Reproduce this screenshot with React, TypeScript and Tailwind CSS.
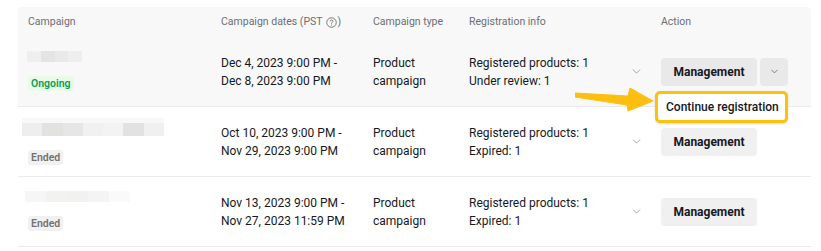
import { ChevronDown } from 'lucide-react'

type Row = {
  status: 'Ongoing' | 'Ended'
  start: string
  end: string
  info: string[]
  blur: { w: number; ml: number; shades: string[]; top?: boolean }
  open?: boolean
}

const rows: Row[] = [
  {
    status: 'Ongoing',
    start: 'Dec 4, 2023 9:00 PM -',
    end: 'Dec 8, 2023 9:00 PM',
    info: ['Registered products: 1', 'Under review: 1'],
    blur: { w: 55, ml: -1, shades: ['bg-[#efefef]', 'bg-[#e4e4e2]', 'bg-[#e9e9e9]', 'bg-[#eeeeee]'] },
    open: true,
  },
  {
    status: 'Ended',
    start: 'Oct 10, 2023 9:00 PM -',
    end: 'Nov 29, 2023 9:00 PM',
    info: ['Registered products: 1', 'Expired: 1'],
    blur: {
      w: 142,
      ml: -6,
      shades: ['bg-[#eeeeee]', 'bg-[#e2e2e0]', 'bg-[#e6e6e6]', 'bg-[#f1f1f1]', 'bg-[#f3f3f3]', 'bg-[#e2e2e2]', 'bg-[#f0f0f0]'],
      top: true,
    },
  },
  {
    status: 'Ended',
    start: 'Nov 13, 2023 9:00 PM -',
    end: 'Nov 27, 2023 11:59 PM',
    info: ['Registered products: 1', 'Expired: 1'],
    blur: { w: 105, ml: -3, shades: ['bg-[#f6f6f6]', 'bg-[#f2f2f1]', 'bg-[#f1f1ef]', 'bg-[#f4f4f4]', 'bg-[#fafafa]'] },
  },
]

const cols = 'grid grid-cols-[203px_152px_96px_155px_37px_1fr] items-center'

function Blur({ blur }: { blur: Row['blur'] }) {
  return (
    <div style={{ width: blur.w, marginLeft: blur.ml }} className="flex flex-col">
      {blur.top && <div className="h-[5px] w-full bg-[#f8f8f8]" />}
      <div className={`flex ${blur.top ? 'h-[13px]' : 'h-[11px]'}`}>
        {blur.shades.map((s, i) => (
          <div key={i} className={`flex-1 ${s}`} />
        ))}
      </div>
    </div>
  )
}

export default function App() {
  return (
    <div className="min-h-screen bg-white pt-[7px] font-['Roboto',sans-serif] text-[#161823]">
      <div className="ml-[18px] w-[793px]">
        {/* header + hovered first row share the grey */}
        <div className="rounded-t-[4px] bg-[#f8f8f8]">
          <div className={`${cols} h-[30px] text-[10.5px] text-[#6d6e75]`}>
            <div className="pl-[10px]">Campaign</div>
            <div className="flex items-center">
              Campaign dates (PST
              <svg width="11" height="11" viewBox="0 0 12 12" className="ml-[3px] mr-[1px]">
                <circle cx="6" cy="6" r="5.2" fill="none" stroke="#6d6e75" strokeWidth="1" />
                <path d="M4.5 4.7a1.5 1.5 0 1 1 2.2 1.3c-.5.3-.7.5-.7 1v.4" fill="none" stroke="#6d6e75" strokeWidth="1" />
                <circle cx="6" cy="8.8" r="0.6" fill="#6d6e75" />
              </svg>
              )
            </div>
            <div>Campaign type</div>
            <div>Registration info</div>
            <div />
            <div>Action</div>
          </div>
          <RowView row={rows[0]} />
        </div>
        <RowView row={rows[1]} />
        <RowView row={rows[2]} />
      </div>
    </div>
  )
}

function RowView({ row }: { row: Row }) {
  return (
    <div className={`${cols} h-[70px] border-b border-[#ebebeb] text-[12px] leading-[18px]`}>
      <div className="flex flex-col gap-[12px] pl-[10px]">
        <Blur blur={row.blur} />
        <div>
          <span
            className={`rounded-[3px] px-[3px] py-[1px] text-[10.5px] leading-[13px] font-semibold ${
              row.status === 'Ongoing' ? 'bg-[#e9fbe6] text-[#0b9e55]' : 'bg-[#f1f1f2] text-[#75726e]'
            }`}
          >
            {row.status}
          </span>
        </div>
      </div>
      <div>
        <div>{row.start}</div>
        <div>{row.end}</div>
      </div>
      <div>
        <div>Product</div>
        <div>campaign</div>
      </div>
      <div>
        {row.info.map((t) => (
          <div key={t}>{t}</div>
        ))}
      </div>
      <div className="flex pl-[6px]">
        <ChevronDown size={13} strokeWidth={1.4} className="text-[#8a8b91]" />
      </div>
      <div>
        <div className="relative flex gap-[3px]">
          <button className="h-[28px] w-[96px] rounded-[4px] bg-black/[0.06] text-[12px] font-bold">
            Management
          </button>
          {row.open && (
            <>
              <button className="flex h-[28px] w-[28px] items-center justify-center rounded-[4px] bg-black/[0.06]">
                <ChevronDown size={11} strokeWidth={1.6} className="text-[#55565c]" />
              </button>
              <svg
                width="80"
                height="26"
                viewBox="0 0 80 26"
                className="absolute left-[-86px] top-[29px]"
              >
                <path
                  d="M0 6 L53 9 L55 1 L78 14 L53 24 L52 18 L0 10 Z"
                  fill="#fdbf0f"
                  strokeLinejoin="round"
                  stroke="#fdbf0f"
                  strokeWidth="1"
                />
              </svg>
              <div className="absolute left-[-6px] top-[33px] z-10 flex h-[32px] w-[133px] items-center whitespace-nowrap rounded-[5px] border-[3px] border-[#fcc10d] bg-white pl-[8px] text-[12px] font-medium shadow-sm">
                Continue registration
              </div>
            </>
          )}
        </div>
      </div>
    </div>
  )
}
